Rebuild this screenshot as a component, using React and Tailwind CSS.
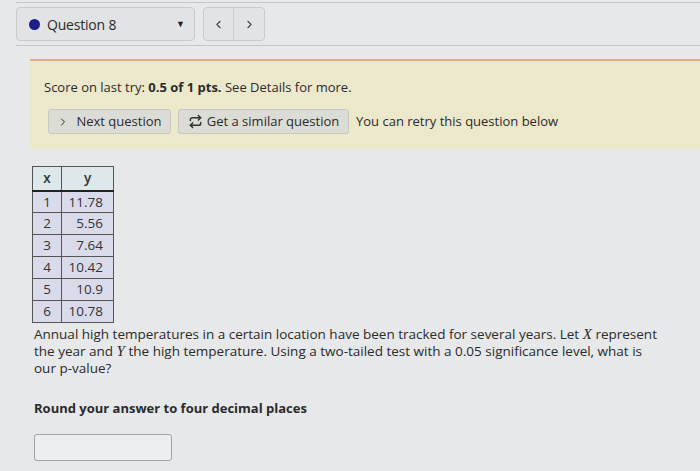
import React from 'react';
import { ChevronLeft, ChevronRight } from 'lucide-react';

const rows = [
    ['1', '11.78'],
    ['2', '5.56'],
    ['3', '7.64'],
    ['4', '10.42'],
    ['5', '10.9'],
    ['6', '10.78'],
];

const RetryIcon = () => (
    <svg width="15" height="15" viewBox="0 0 16 16" fill="none" stroke="#333" strokeWidth="1.6" strokeLinecap="round" strokeLinejoin="round">
        <path d="M2.5 7V6a2 2 0 0 1 2-2h9" />
        <path d="M11 1.5L13.5 4 11 6.5" />
        <path d="M13.5 9v1a2 2 0 0 1-2 2h-9" />
        <path d="M5 9.5L2.5 12 5 14.5" />
    </svg>
);

const App = () => {
    return (
        <div
            className="w-[700px] h-[471px] overflow-hidden bg-[#e6e8e9] text-[#2b2b2b]"
            style={{ fontFamily: '"Open Sans", "Noto Sans", sans-serif' }}
        >
            {/* top nav */}
            <div className="ml-[16px] mt-[2px] border-t border-[#c4c7ca] pt-[4px] pb-[4px] border-b flex items-center gap-[8px]">
                <div className="w-[179px] h-[34px] flex items-center bg-[#e1e3e5] border border-[#c9cccf] rounded-[4px] pl-[12px] pr-[9px]">
                    <span className="w-[11px] h-[11px] rounded-full bg-[#1c1f86]" />
                    <span className="ml-[7px] text-[14px] tracking-[-0.2px]">Question 8</span>
                    <span className="ml-auto text-[9px] text-[#222]">▼</span>
                </div>
                <div className="h-[34px] w-[62px] flex bg-[#e1e3e5] border border-[#c9cccf] rounded-[4px]">
                    <button className="w-[30px] h-full flex items-center justify-center text-[#444] border-r border-[#c9cccf]">
                        <ChevronLeft size={13} strokeWidth={2} />
                    </button>
                    <button className="flex-1 h-full flex items-center justify-center text-[#444]">
                        <ChevronRight size={13} strokeWidth={2} />
                    </button>
                </div>
            </div>

            {/* score panel */}
            <div className="ml-[30px] mt-[13px] h-[90px] bg-[#ebe8cc] border-t-[2px] border-[#e3a98a] pl-[14px] pt-[17px]">
                <p className="text-[13px] leading-[18px] text-[#2b2b2b]">
                    Score on last try: <b>0.5 of 1 pts.</b> See Details for more.
                </p>
                <div className="mt-[13px] flex items-center">
                    <button className="ml-[4px] w-[123px] h-[25px] flex items-center justify-center gap-[7px] bg-[#dcdcd6] border border-[#c8c8c0] rounded-[3px] text-[13px]">
                        <ChevronRight size={12} strokeWidth={2} /> Next question
                    </button>
                    <button className="ml-[7px] w-[171px] h-[25px] flex items-center justify-center gap-[4px] bg-[#dcdcd6] border border-[#c8c8c0] rounded-[3px] text-[13px]">
                        <RetryIcon /> Get a similar question
                    </button>
                    <span className="ml-[7px] text-[13px]">You can retry this question below</span>
                </div>
            </div>

            {/* table */}
            <table className="ml-[32px] mt-[17px] border-collapse text-[13.5px] text-[#333]">
                <thead>
                    <tr className="h-[24px] bg-[#dce8ea]">
                        <th className="w-[29px] border border-[#555] border-b-[2px] border-b-[#222] font-semibold">x</th>
                        <th className="w-[52px] border border-[#555] border-b-[2px] border-b-[#222] font-semibold">y</th>
                    </tr>
                </thead>
                <tbody>
                    {rows.map(([x, y]) => (
                        <tr key={x} className="h-[22px] bg-[#dadbea]">
                            <td className="border border-[#555] text-center">{x}</td>
                            <td className="border border-[#555] text-right pr-[10px]">{y}</td>
                        </tr>
                    ))}
                </tbody>
            </table>

            {/* question */}
            <div className="ml-[34px] mt-[3px] w-[628px] text-[13.5px] leading-[17px] text-[#2b2b2b]">
                <p>
                    Annual high temperatures in a certain location have been tracked for several years. Let{' '}
                    <i style={{ fontFamily: '"Liberation Serif", serif' }} className="text-[15px] leading-none">X</i> represent
                    the year and <i style={{ fontFamily: '"Liberation Serif", serif' }} className="text-[15px] leading-none">Y</i> the high
                    temperature. Using a two-tailed test with a 0.05 significance level, what is our p-value?
                </p>
                <p className="mt-[23px] font-bold text-[13px]">Round your answer to four decimal places</p>
                <input
                    type="text"
                    className="mt-[17px] w-[138px] h-[27px] bg-[#eceeef] border border-[#9fa3a6] rounded-[3px]"
                />
            </div>
        </div>
    );
};

export default App;
